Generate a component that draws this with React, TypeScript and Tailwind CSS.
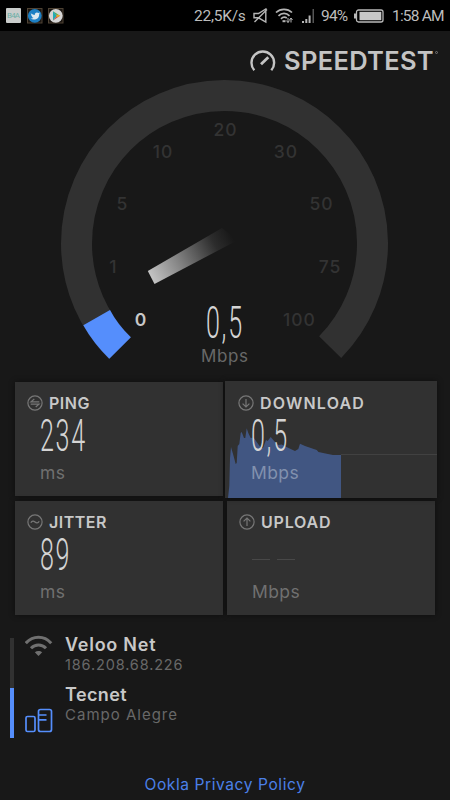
import type { ReactNode } from "react";

const labels = [
  { value: "1", x: 113.5, y: 266.5 },
  { value: "5", x: 122.5, y: 203.8 },
  { value: "10", x: 163, y: 151.5 },
  { value: "20", x: 225.5, y: 130 },
  { value: "30", x: 285.8, y: 151.5 },
  { value: "50", x: 321.5, y: 203.8 },
  { value: "75", x: 330, y: 266.5 },
  { value: "100", x: 299.5, y: 320 },
];

function StatusBar() {
  return (
    <header className="flex h-[31px] items-center bg-black pl-[6px] font-[Roboto,sans-serif] text-[15.5px] leading-[31px] text-[#bdbdbd]">
      <svg width="60" height="16" viewBox="0 0 60 16">
        <rect x="0" y="0" width="15" height="15" rx="1" fill="#c9cccb" />
        <text x="7.5" y="10" textAnchor="middle" fontSize="8" fontFamily="Roboto" textLength="13" fill="#6fb0a8">
          B4A
        </text>
        <rect x="21.5" y=".5" width="14.5" height="14.5" fill="#1c1712" stroke="#4f4334" />
        <circle cx="28.8" cy="7.8" r="6.9" fill="#1c7fc4" />
        <path
          d="M24.5 4.8c1.2 1.4 2.6 2 4.3 2.1-.4-2 2.2-3.3 3.7-1.8l1.5-.5-.8 1.3c.2 3.6-2.4 5.7-5.2 5.7-1.3 0-2.4-.3-3.5-1 1.2 0 2-.2 2.9-.9-1-.1-1.5-.7-1.7-1.4h.8c-1-.4-1.5-1.1-1.5-2.1l.8.2c-.9-.6-1.1-1.3-1.3-1.6z"
          fill="#dbe8f0"
        />
        <rect x="42.5" y=".5" width="14.5" height="14.5" fill="#1c1712" stroke="#4f4334" />
        <circle cx="49.8" cy="7.8" r="6.9" fill="#d5d5d5" />
        <path d="M47 3.2v9.2l4-4.6z" fill="#25a9b4" />
        <path d="M47 3.2l7 4.6h-3z" fill="#3aa757" />
        <path d="M47 12.4l7-4.6h-3z" fill="#d8453a" />
        <path d="M50.5 6.2l4 1.6-4 1.7z" fill="#e9a927" />
      </svg>
      <span className="ml-[128px] w-[60px] pt-px tracking-[-0.25px]">22,5K/s</span>
      <svg width="15" height="16" viewBox="0 0 15 16" fill="none" stroke="#b5b5b5" strokeWidth="1.4" className="-ml-px">
        <path d="M1 5.5h4.5L12.8 1v13L5.5 9.8H1zM14 1.5L1.5 14" />
      </svg>
      <svg width="20" height="16" viewBox="0 0 20 16" fill="none" stroke="#b5b5b5" strokeWidth="1.7" className="ml-[7px]">
        <path d="M1 4.5C5.5.2 12.5.2 17 4.5M3.5 7.8c3.3-3.2 7.8-3.2 11 0M6 10.8c1.7-1.7 4-1.9 5.8-.8" />
        <path d="M7.5 13.2h3" strokeWidth="2" />
        <path d="M13 10v4.5M11.3 12.5l1.7 2 1.5-2M16 14.5V10M14.5 12l1.5-2 1.5 2" strokeWidth="1" />
      </svg>
      <svg width="14" height="16" viewBox="0 0 14 16" fill="#b5b5b5" className="ml-[7px]">
        <path d="M0 13h2v2H0zM3.3 11h2v4h-2zM6.6 7.5h2V15h-2z" />
        <path d="M10.5 1H12v14h-1.5z" fill="#555" />
      </svg>
      <span className="ml-[5px] w-[34px] pt-px tracking-[-0.8px]">94%</span>
      <svg width="30" height="14" viewBox="0 0 30 14" className="-ml-px">
        <rect x="2.5" y="1" width="26.5" height="12" rx="2" fill="none" stroke="#b9b9b9" strokeWidth="1.3" />
        <path d="M0 4.5h2.5v5H0z" fill="#b9b9b9" />
        <rect x="5.5" y="2.8" width="21.8" height="8.4" fill="#c9c9c9" />
      </svg>
      <span className="ml-[8px] pt-px whitespace-nowrap tracking-[-0.8px]">1:58 AM</span>
    </header>
  );
}

function Brand() {
  return (
    <div className="flex h-[47px] items-center justify-end pt-[12px] pr-[12px]">
      <svg width="28" height="24" viewBox="0 0 28 24" fill="none" stroke="#c4c4c4" className="mr-[6px]">
        <path d="M4.3 21.3A11.3 11.3 0 1 1 21.3 21.3" strokeWidth="2.4" />
        <path d="M11 15.3L18.3 8.2" strokeWidth="2.8" />
      </svg>
      <h1 className="text-[25.5px] leading-[30px] font-semibold tracking-[0.3px] text-[#c4c4c4]">SPEEDTEST</h1>
      <span className="-mt-[17px] ml-px size-[3px] rounded-full border border-[#777]" />
    </div>
  );
}

function Reading({ children }: { children: ReactNode }) {
  return (
    <p className="origin-left scale-x-[0.57] font-[Roboto,sans-serif] text-[44px] leading-[40px] font-light tracking-[3px] whitespace-nowrap text-[#d4d4d4]">
      {children}
    </p>
  );
}

function Gauge() {
  return (
    <div className="relative h-[292px]">
      <svg width="450" height="292" viewBox="0 78 450 292" className="block">
        <defs>
          <linearGradient id="needle" gradientUnits="userSpaceOnUse" x1="151" y1="278" x2="236" y2="233">
            <stop offset="0" stopColor="#c4c4c4" />
            <stop offset=".35" stopColor="#808080" />
            <stop offset=".75" stopColor="#2c2c2c" />
            <stop offset=".95" stopColor="#181818" />
          </linearGradient>
        </defs>
        <path
          d="M119.85 348.15A148 148 0 1 1 330.15 347.15"
          fill="none"
          stroke="#313131"
          strokeWidth="31"
        />
        <path d="M83.3 325.3L110 310Q117.5 324.5 130.9 337.3L109.3 358.7Q93.5 343.5 83.3 325.3Z" fill="#558efc" />
        <path d="M147.8 271L222 228L238 240L154.5 284Z" fill="url(#needle)" />
        <g fontFamily="Inter, sans-serif" fontSize="17.5" fontWeight="500" fill="#333" textAnchor="middle" letterSpacing="1">
          {labels.map((l) => (
            <text key={l.value} x={l.x} y={l.y + 6.4}>
              {l.value}
            </text>
          ))}
          <text x="141" y="326.4" fill="#c8c8c8" fontWeight="600">
            0
          </text>
        </g>
      </svg>
      <div className="absolute top-[225px] left-[205.5px]">
        <Reading>0,5</Reading>
      </div>
      <p className="absolute top-[267px] left-[201px] text-[17px] leading-[22px] tracking-[0.6px] text-[#686868]">Mbps</p>
    </div>
  );
}

function RoundIcon({ d }: { d: string }) {
  return (
    <svg width="16" height="16" viewBox="0 0 16 16" fill="none" stroke="#777" strokeWidth="1.2">
      <circle cx="8" cy="8" r="7.1" />
      <path d={d} />
    </svg>
  );
}

function Card({
  title,
  icon,
  unit,
  className,
  titleClass = "tracking-[0.5px]",
  unitClass = "text-[#707070]",
  children,
}: {
  title: string;
  icon: string;
  unit: string;
  className: string;
  titleClass?: string;
  unitClass?: string;
  children: ReactNode;
}) {
  return (
    <section className={`bg-[#313131] shadow-[0_0_6px_rgba(0,0,0,0.45)] ${className}`}>
      <div className="flex h-[20px] items-center gap-[6px]">
        <RoundIcon d={icon} />
        <h2 className={`text-[16px] leading-[20px] font-semibold text-[#c8c8c8] ${titleClass}`}>{title}</h2>
      </div>
      <div className="mt-[3px] ml-[12.5px] h-[40px]">{children}</div>
      <p className={`relative mt-[7px] ml-[13px] text-[17.5px] leading-[20px] tracking-[0.4px] ${unitClass}`}>{unit}</p>
    </section>
  );
}

function Results() {
  return (
    <main className="flex justify-between pt-[11px] pr-[13px] pl-[15px]">
      <div className="flex flex-col gap-[5px] pt-px">
        <Card
          title="PING"
          icon="M12.3 6.8H4L7.3 4M3.7 9.2H12L8.7 12"
          unit="ms"
          className="h-[114px] w-[208px] pt-[11px] pl-[12px]"
        >
          <Reading>234</Reading>
        </Card>
        <Card
          title="JITTER"
          icon="M3.8 8.8C5 6.6 6.6 6.6 8 8s3 1.4 4.2-.8"
          unit="ms"
          className="h-[114px] w-[208px] pt-[11px] pl-[12px]"
        >
          <Reading>89</Reading>
        </Card>
      </div>
      <div className="flex flex-col gap-[3px]">
        <Card
          title="DOWNLOAD"
          icon="M8 4v8M4.6 8.6L8 12l3.4-3.4"
          unit="Mbps"
          titleClass="tracking-[1.2px]"
          unitClass="text-[#8291ae]"
          className="relative h-[117px] w-[212px] pt-[12px] pl-[13px]"
        >
          <svg width="212" height="117" viewBox="225 381 212 117" className="absolute top-0 left-0">
            <path
              d="M228 498L229.3 486L230 458L231 447L233.3 455L235.7 464L236.7 463L237.7 446L239.3 444L240.7 433L241.7 432L244 438L245.3 438L246.7 428.3L248.3 433L250.7 438L253.5 437.5L260.7 447.5L263 448L266 440L267.7 441L270.7 437L275 442L278.3 445L281.7 444.5L288 447.7L295 451L298.3 449L300 443.7L305 446L316.7 450L318.5 452L326.7 453.7L333 455L341 455V498Z"
              fill="#415682"
            />
            <path d="M341 454.5H437" stroke="#414141" />
          </svg>
          <div className="relative">
            <Reading>0,5</Reading>
          </div>
        </Card>
        <Card
          title="UPLOAD"
          icon="M8 12V4M4.6 7.4L8 4l3.4 3.4"
          unit="Mbps"
          titleClass="tracking-[0.8px]"
          className="ml-[2px] h-[114px] w-[208px] pt-[11px] pl-[12px]"
        >
          <div className="flex gap-[7px] pt-[24px]">
            <span className="h-px w-[18px] bg-[#484848]" />
            <span className="h-px w-[18px] bg-[#484848]" />
          </div>
        </Card>
      </div>
    </main>
  );
}

function Connection() {
  return (
    <section className="mt-[23px] flex pl-[10px]">
      <div className="w-[4px]">
        <div className="h-[50px] bg-[#313131]" />
        <div className="h-[50px] bg-[#558efc]" />
      </div>
      <div className="flex w-[51px] flex-col pl-[11px]">
        <svg width="28" height="21" viewBox="25 635 28 21" fill="none" stroke="#707070" strokeWidth="3" className="-mt-[3px]">
          <path d="M25.8 643.2C33 635.3 44 635.3 51.2 643.2M31 648.3C35.3 643.9 41.7 643.9 46 648.3" />
          <path d="M34.8 652.3C37 650.4 40 650.4 42.2 652.3L38.5 656Z" fill="#707070" stroke="none" />
        </svg>
        <svg width="28" height="25" viewBox="25 708 28 25" fill="none" stroke="#558efc" strokeWidth="1.7" className="mt-[52px]">
          <rect x="26" y="716.5" width="9" height="15" rx="1.5" />
          <path d="M38.5 711.5Q38.5 709.5 40.5 709.5H49.5Q51.5 709.5 51.5 711.5V729.5Q51.5 731.5 49.5 731.5H40.5Q38.5 731.5 38.5 729.5ZM38.5 715H46.5M38.5 719.8H46.5" />
        </svg>
      </div>
      <div>
        <p className="mt-[-3px] text-[18px] leading-[20px] font-semibold tracking-[0.75px] text-[#c8c8c8]">Veloo Net</p>
        <p className="text-[14.5px] leading-[20px] tracking-[0.85px] text-[#686868]">186.208.68.226</p>
        <p className="mt-[10px] text-[18px] leading-[20px] font-semibold tracking-[0.4px] text-[#c8c8c8]">Tecnet</p>
        <p className="text-[15px] leading-[20px] tracking-[1px] text-[#686868]">Campo Alegre</p>
      </div>
    </section>
  );
}

export default function App() {
  return (
    <div className="h-[800px] w-[450px] overflow-hidden bg-[#181818] font-[Inter,sans-serif]">
      <StatusBar />
      <Brand />
      <Gauge />
      <Results />
      <Connection />
      <footer className="mt-[34px] text-center">
        <a href="#" className="text-[15.5px] leading-[20px] tracking-[0.6px] text-[#4b80e8]">
          Ookla Privacy Policy
        </a>
      </footer>
    </div>
  );
}
